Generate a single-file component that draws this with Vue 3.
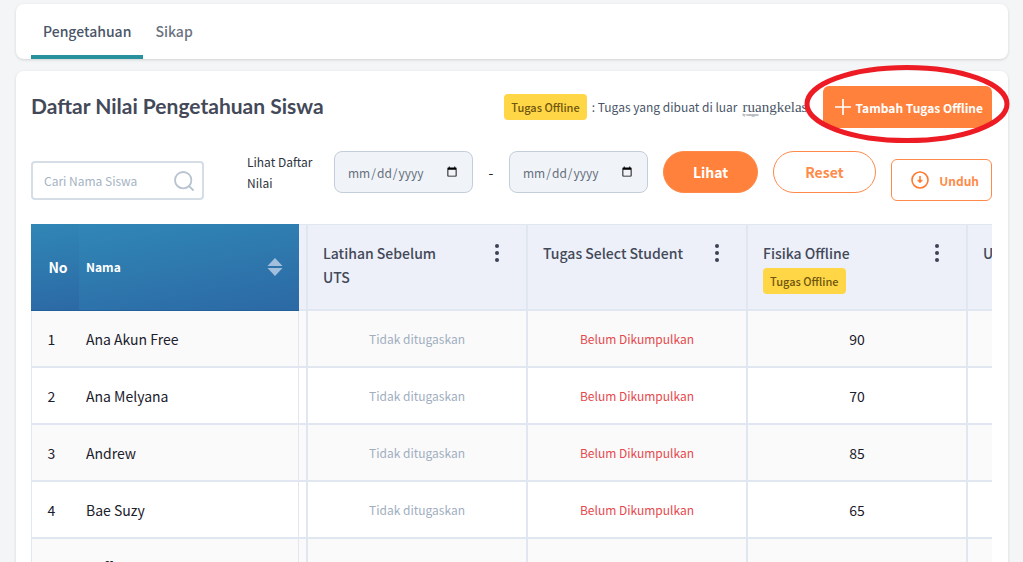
<script setup>
import { ref } from 'vue'

const tabs = ['Pengetahuan', 'Sikap']
const activeTab = ref('Pengetahuan')
const search = ref('')
const dateFrom = ref('')
const dateTo = ref('')

const tasks = [
  { title: 'Latihan Sebelum\nUTS' },
  { title: 'Tugas Select Student' },
  { title: 'Fisika Offline', offline: true },
  { title: 'Ulangan Harian' },
]

const students = [
  { name: 'Ana Akun Free', score: 90 },
  { name: 'Ana Melyana', score: 70 },
  { name: 'Andrew', score: 85 },
  { name: 'Bae Suzy', score: 65 },
  { name: 'Daffa', score: 80 },
]
</script>

<template>
  <div class="page">
    <nav class="card tabs">
      <button
        v-for="tab in tabs"
        :key="tab"
        type="button"
        class="tab"
        :class="{ active: tab === activeTab }"
        @click="activeTab = tab"
      >{{ tab }}</button>
    </nav>

    <main class="card panel">
      <header class="heading">
        <h1>Daftar Nilai Pengetahuan Siswa</h1>
        <p class="legend">
          <span class="badge">Tugas Offline</span>
          <span class="meaning">: Tugas yang dibuat di luar</span>
          <span class="brand">ruangkelas<small>by ruangguru</small></span>
        </p>
        <div class="add-wrap">
          <button type="button" class="add">
            <svg width="16" height="16" viewBox="0 0 16 16" aria-hidden="true">
              <path d="M8 0v16M0 8h16" stroke="#fff" stroke-width="1.7" />
            </svg>
            Tambah Tugas Offline
          </button>
          <svg class="ring" viewBox="0 0 206 80" preserveAspectRatio="none" aria-hidden="true">
            <ellipse cx="103" cy="40" rx="100" ry="36.5" fill="none" stroke="#ed1c24" stroke-width="5" />
          </svg>
        </div>
      </header>

      <form class="filters" @submit.prevent>
        <div class="search">
          <input v-model="search" type="text" aria-label="Cari Nama Siswa" placeholder="Cari Nama Siswa" />
          <svg width="20" height="20" viewBox="0 0 20 20" fill="none" stroke="#b8c4d0" stroke-width="1.8" aria-hidden="true">
            <circle cx="9.2" cy="9.2" r="8.2" />
            <path d="M15 15l4 4" stroke-linecap="round" />
          </svg>
        </div>
        <label class="range-label" for="date-from">Lihat Daftar Nilai</label>
        <input id="date-from" v-model="dateFrom" class="date" type="date" />
        <span class="dash">-</span>
        <input v-model="dateTo" class="date" type="date" aria-label="Sampai tanggal" />
        <button type="submit" class="pill filled">Lihat</button>
        <button type="reset" class="pill">Reset</button>
        <button type="button" class="download">
          <svg width="18" height="18" viewBox="0 0 18 18" fill="none" stroke="#ff7a2f" stroke-width="1.6" aria-hidden="true">
            <circle cx="9" cy="9" r="8" />
            <path d="M9 5v6" />
            <path d="M6.6 9.2L9 11.8l2.4-2.6z" fill="#ff7a2f" stroke-width="0.8" />
          </svg>
          Unduh
        </button>
      </form>

      <div class="table-wrap">
        <table>
          <colgroup>
            <col class="c-no" />
            <col class="c-name" />
            <col class="c-gap" />
            <col v-for="task in tasks" :key="task.title" class="c-task" />
          </colgroup>
          <thead>
            <tr>
              <th class="blue no" scope="col">No</th>
              <th class="blue name" scope="col">
                <span class="sortable">
                  Nama
                  <svg width="16" height="18" viewBox="0 0 16 18" aria-hidden="true">
                    <path d="M8 0L15.5 8H0.5zM0.5 10h15L8 18z" fill="#a3bfdb" />
                  </svg>
                </span>
              </th>
              <td class="gap"></td>
              <th v-for="task in tasks" :key="task.title" class="task" scope="col">
                <div class="task-head">
                  <div class="task-title">
                    <div class="task-name">{{ task.title }}</div>
                    <span v-if="task.offline" class="badge">Tugas Offline</span>
                  </div>
                  <button type="button" class="menu" aria-label="Menu tugas">
                    <svg width="4" height="18" viewBox="0 0 4 18" fill="#3b4252" aria-hidden="true">
                      <circle cx="2" cy="2" r="2" />
                      <circle cx="2" cy="9" r="2" />
                      <circle cx="2" cy="16" r="2" />
                    </svg>
                  </button>
                </div>
              </th>
            </tr>
          </thead>
          <tbody>
            <tr v-for="(student, i) in students" :key="student.name">
              <td class="no">{{ i + 1 }}</td>
              <td class="name">{{ student.name }}</td>
              <td class="gap"></td>
              <td class="muted">Tidak ditugaskan</td>
              <td class="late">Belum Dikumpulkan</td>
              <td class="score">{{ student.score }}</td>
              <td></td>
            </tr>
          </tbody>
        </table>
      </div>
    </main>
  </div>
</template>

<style>
body {
  background: #f4f5f7;
}
</style>

<style scoped>
* {
  box-sizing: border-box;
}
.page {
  display: flex;
  flex-direction: column;
  gap: 12px;
  height: 100vh;
  padding: 4px 15px 0 16px;
  overflow: hidden;
  background: #f4f5f7;
  color: #1a202c;
  font-family: "Noto Sans CJK SC", "Noto Sans CJK JP", sans-serif;
  font-size: 14px;
  line-height: 20px;
}
button,
input {
  font-family: inherit;
  margin: 0;
}
button {
  cursor: pointer;
}
.card {
  flex: none;
  border-radius: 8px;
  background: #fff;
  box-shadow: 0 1px 3px rgba(0, 0, 0, 0.14);
}
.tabs {
  display: flex;
  height: 55px;
  padding: 0 15px;
}
.tab {
  padding: 2px 12px 0;
  border: 0;
  border-bottom: 4px solid transparent;
  border-radius: 3px 3px 0 0;
  background: linear-gradient(#fff, #fff) padding-box;
  color: #6b7280;
  font-size: 14px;
  font-weight: 500;
}
.tab.active {
  border-bottom-color: #27929d;
  color: #4a5568;
}
.panel {
  padding: 15px 16px 0 15px;
}
.heading {
  display: flex;
  align-items: center;
}
h1 {
  margin: 0;
  padding-bottom: 2px;
  color: #434958;
  font-family: Lato, sans-serif;
  font-size: 21px;
  font-weight: 700;
  line-height: 28px;
  white-space: nowrap;
}
.legend {
  display: flex;
  align-items: center;
  gap: 5px;
  margin: 0 16px 0 auto;
  color: #4a5568;
  font-size: 12px;
  white-space: nowrap;
}
.badge {
  display: block;
  width: fit-content;
  padding: 3px 7px;
  border-radius: 4px;
  background: #ffd645;
  color: #6f5510;
  font-size: 11px;
  font-weight: 500;
  line-height: 20px;
}
.brand {
  position: relative;
  font-family: "Liberation Serif", serif;
  font-size: 15px;
}
.brand small {
  position: absolute;
  left: 0;
  bottom: 0;
  font-size: 3px;
  line-height: 4px;
}
.add-wrap {
  position: relative;
}
.add {
  display: flex;
  align-items: center;
  gap: 4px;
  height: 42px;
  padding: 0 9px 0 12px;
  border: 0;
  border-radius: 6px;
  background: #ff813b;
  color: #fff;
  font-size: 12px;
  font-weight: 700;
  white-space: nowrap;
}
.ring {
  position: absolute;
  left: -19px;
  top: -22px;
  width: 206px;
  height: 80px;
  pointer-events: none;
}
.filters {
  display: flex;
  align-items: flex-start;
  margin-top: 23px;
}
.search {
  display: flex;
  align-items: center;
  width: 173px;
  height: 39px;
  margin: 10px 43px 0 0;
  padding: 0 8px 0 11px;
  border: 2px solid #d5dde6;
  border-radius: 4px;
}
.search input {
  flex: 1;
  min-width: 0;
  padding: 0;
  border: 0;
  outline: 0;
  background: none;
  font-size: 12px;
}
.search input::placeholder {
  color: #a5b3c3;
}
.range-label {
  width: 72px;
  margin-right: 15px;
  color: #2d3340;
  font-size: 12px;
  line-height: 21px;
}
.date {
  width: 139px;
  height: 42px;
  padding: 0 12px;
  border: 1px solid #c3cedb;
  border-radius: 8px;
  background: #f0f4f9;
  color: #666e7b;
  font-size: 12px;
}
.dash {
  width: 36px;
  line-height: 42px;
  text-align: center;
}
.pill {
  height: 42px;
  margin-left: 15px;
  padding: 0 31px;
  border: 1px solid #ff8a4a;
  border-radius: 21px;
  background: #fff;
  color: #ff8a4a;
  font-size: 14px;
  font-weight: 700;
}
.pill.filled {
  padding: 0 29px;
  background: #ff813b;
  color: #fff;
}
.download {
  display: flex;
  align-items: center;
  gap: 10px;
  height: 42px;
  margin: 8px 0 0 auto;
  padding: 0 12px 0 19px;
  border: 1px solid #ff8a4a;
  border-radius: 6px;
  background: #fff;
  color: #ff8a4a;
  font-size: 12px;
  font-weight: 700;
}
.table-wrap {
  margin-top: 23px;
  overflow: hidden;
}
table {
  width: 1157px;
  border-collapse: separate;
  border-spacing: 0;
  table-layout: fixed;
}
.c-no {
  width: 48px;
}
.c-name,
.c-task {
  width: 220px;
}
.c-gap {
  width: 9px;
}
th,
td {
  padding: 0;
  border-right: 2px solid #e0e7f0;
  border-bottom: 2px solid #e0e7f0;
  text-align: center;
}
thead th,
thead td {
  height: 87px;
  background: #edf0f9;
  border-top: 1px solid #e0e7f0;
}
thead th.blue {
  border-top: 0;
  border-right: 0;
  border-bottom: 1px solid #22609c;
  background: linear-gradient(170deg, #3087b6, #2c69a5);
  color: #fff;
  font-size: 12px;
}
thead th.no {
  padding-left: 6px;
  font-size: 14px;
}
.sortable {
  display: flex;
  align-items: center;
  justify-content: space-between;
  padding: 0 16px 0 7px;
}
thead th.task {
  padding: 16px 27px 0 15px;
  color: #434958;
  font-size: 14px;
  font-weight: 500;
  line-height: 24px;
  text-align: left;
  vertical-align: top;
}
.task-head {
  display: flex;
  align-items: flex-start;
  justify-content: space-between;
}
.task-name {
  white-space: pre-line;
}
.task-title .badge {
  margin-top: 3px;
}
.menu {
  display: flex;
  padding: 3px 0;
  border: 0;
  background: none;
}
tbody td {
  height: 57px;
}
tbody tr:nth-child(odd) td {
  background: #fafafa;
}
tbody td.no {
  border-right: 0;
  border-left: 1px solid #e0e7f0;
  padding-right: 8px;
}
tbody td.name {
  padding-left: 7px;
  border-right-width: 1px;
  text-align: left;
}
tbody .muted {
  color: #a0aec0;
  font-size: 12px;
}
tbody .late {
  color: #e5484d;
  font-size: 12px;
}
</style>
